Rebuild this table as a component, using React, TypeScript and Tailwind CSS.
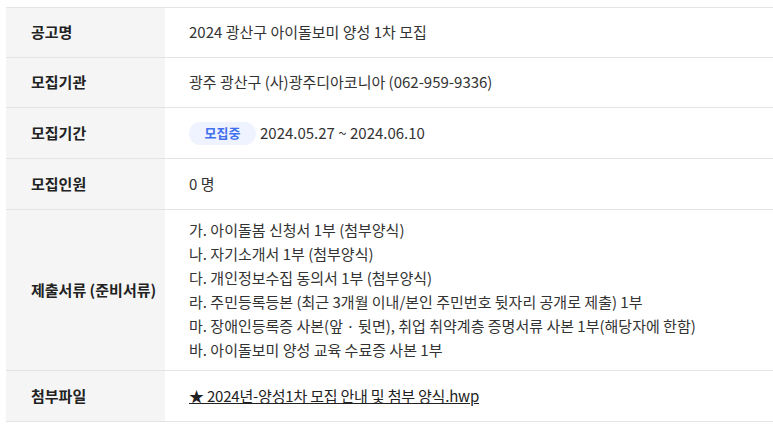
const FONT = { fontFamily: '"Noto Sans CJK KR", "Noto Sans", sans-serif' };

const docs = [
  '가. 아이돌봄 신청서 1부 (첨부양식)',
  '나. 자기소개서 1부 (첨부양식)',
  '다. 개인정보수집 동의서 1부 (첨부양식)',
  '라. 주민등록등본 (최근 3개월 이내/본인 주민번호 뒷자리 공개로 제출) 1부',
  '마. 장애인등록증 사본(앞 · 뒷면), 취업 취약계층 증명서류 사본 1부(해당자에 한함)',
  '바. 아이돌보미 양성 교육 수료증 사본 1부',
];

function Row({
  label,
  children,
  tall,
  big,
}: {
  label: string;
  children: React.ReactNode;
  tall?: boolean;
  big?: boolean;
}) {
  const cell = tall
    ? 'pl-[24px] py-[8px] text-[15px] leading-[24px] text-[#333]'
    : big
      ? 'pl-[24px] h-[50px] flex items-center text-[15px] text-[#333]'
      : 'pl-[24px] h-[49px] flex items-center text-[15px] text-[#333]';
  return (
    <div className="grid grid-cols-[159px_1fr] border-b border-[#e4e4e4]">
      <div className="bg-[#f5f5f5] flex items-center pl-[25px] text-[15px] font-bold text-[#222]">
        {label}
      </div>
      <div className={cell}>{children}</div>
    </div>
  );
}

export default function App() {
  return (
    <div className="min-h-screen bg-white pl-[6px] pt-[7px]" style={FONT}>
      <div className="border-t border-[#e4e4e4] w-[767px]">
        <Row label="공고명">2024 광산구 아이돌보미 양성 1차 모집</Row>
        <Row label="모집기관">광주 광산구 (사)광주디아코니아 (062-959-9336)</Row>
        <Row label="모집기간" big>
          <span className="inline-flex items-center justify-center h-[23px] w-[67px] rounded-full bg-[#eef3ff] text-[#4170ee] text-[13px] font-semibold mr-[4px]">
            모집중
          </span>
          2024.05.27 ~ 2024.06.10
        </Row>
        <Row label="모집인원" big>0 명</Row>
        <Row label="제출서류 (준비서류)" tall>
          {docs.map((d) => (
            <div key={d}>{d}</div>
          ))}
        </Row>
        <Row label="첨부파일" big>
          <a href="#" className="underline text-[#222] tracking-[-0.2px]">
            ★ 2024년-양성1차 모집 안내 및 첨부 양식.hwp
          </a>
        </Row>
      </div>
    </div>
  );
}
